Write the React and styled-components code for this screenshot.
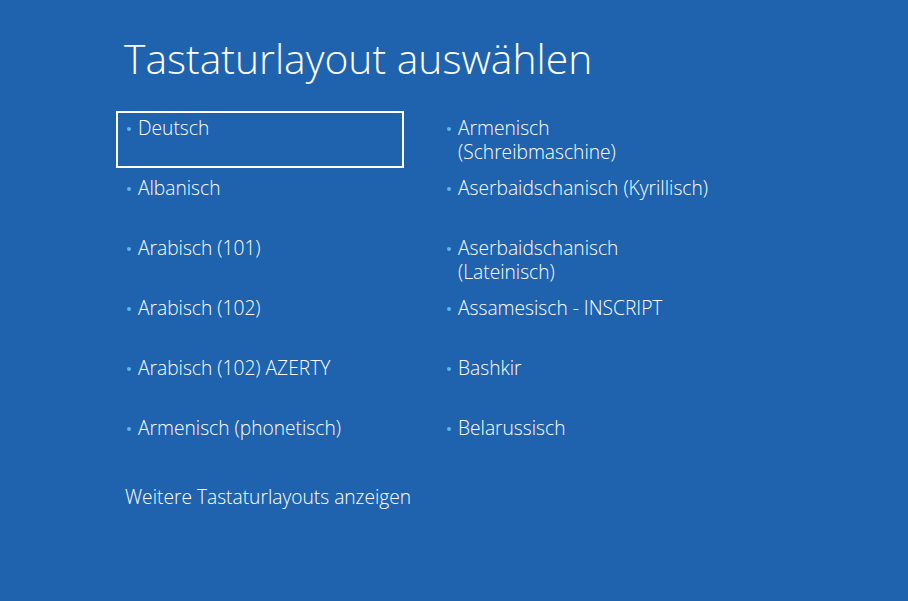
import styled, {createGlobalStyle} from "styled-components";

const GlobalStyle = createGlobalStyle`
  html, body {
    margin: 0;
    padding: 0;
    background: #1f63ae;
  }
  body {
    font-family: "Open Sans", "Noto Sans", sans-serif;
    color: #fff;
  }
`

const Page = styled.main`
  width: 908px;
  height: 601px;
  box-sizing: border-box;
  padding: 32px 0 0 116px;
  background: #1f63ae;
  overflow: hidden;
`

const Title = styled.h1`
  margin: 0 0 27px 8px;
  font-size: 40.8px;
  font-weight: 300;
  line-height: 52px;
`

const Grid = styled.ul`
  list-style: none;
  margin: 0;
  padding: 0;
  display: grid;
  grid-template-columns: 288px 288px;
  grid-auto-rows: 57px;
  column-gap: 32px;
  row-gap: 3px;
`

const Tile = styled.li`
  box-sizing: border-box;
  border: 2px solid ${p => p.$selected ? "#fff" : "transparent"};
  padding: 3px 8px 0 9px;
  display: flex;
  align-items: flex-start;
  gap: 7px;
  font-size: 19.2px;
  font-weight: 300;
  line-height: 24px;
  cursor: pointer;
`

const Bullet = styled.span`
  flex: none;
  width: 4px;
  height: 4px;
  margin-top: 11px;
  border-radius: 50%;
  background: #59b7ec;
`

const More = styled.a`
  display: inline-block;
  margin: 17px 0 0 9px;
  font-size: 19.2px;
  font-weight: 300;
  line-height: 24px;
  color: #fff;
  text-decoration: none;
`

const layouts = [
    ["Deutsch", "Armenisch\n(Schreibmaschine)"],
    ["Albanisch", "Aserbaidschanisch (Kyrillisch)"],
    ["Arabisch (101)", "Aserbaidschanisch\n(Lateinisch)"],
    ["Arabisch (102)", "Assamesisch - INSCRIPT"],
    ["Arabisch (102) AZERTY", "Bashkir"],
    ["Armenisch (phonetisch)", "Belarussisch"],
]

export default function App() {
    return (
        <>
            <GlobalStyle/>
            <Page>
                <Title>Tastaturlayout auswählen</Title>
                <Grid>
                    {layouts.flat().map((name, index) => <Tile key={name} $selected={index === 0}>
                        <Bullet/>
                        <span style={{whiteSpace: "pre-line"}}>{name}</span>
                    </Tile>)}
                </Grid>
                <More href="#">Weitere Tastaturlayouts anzeigen</More>
            </Page>
        </>
    )
}
